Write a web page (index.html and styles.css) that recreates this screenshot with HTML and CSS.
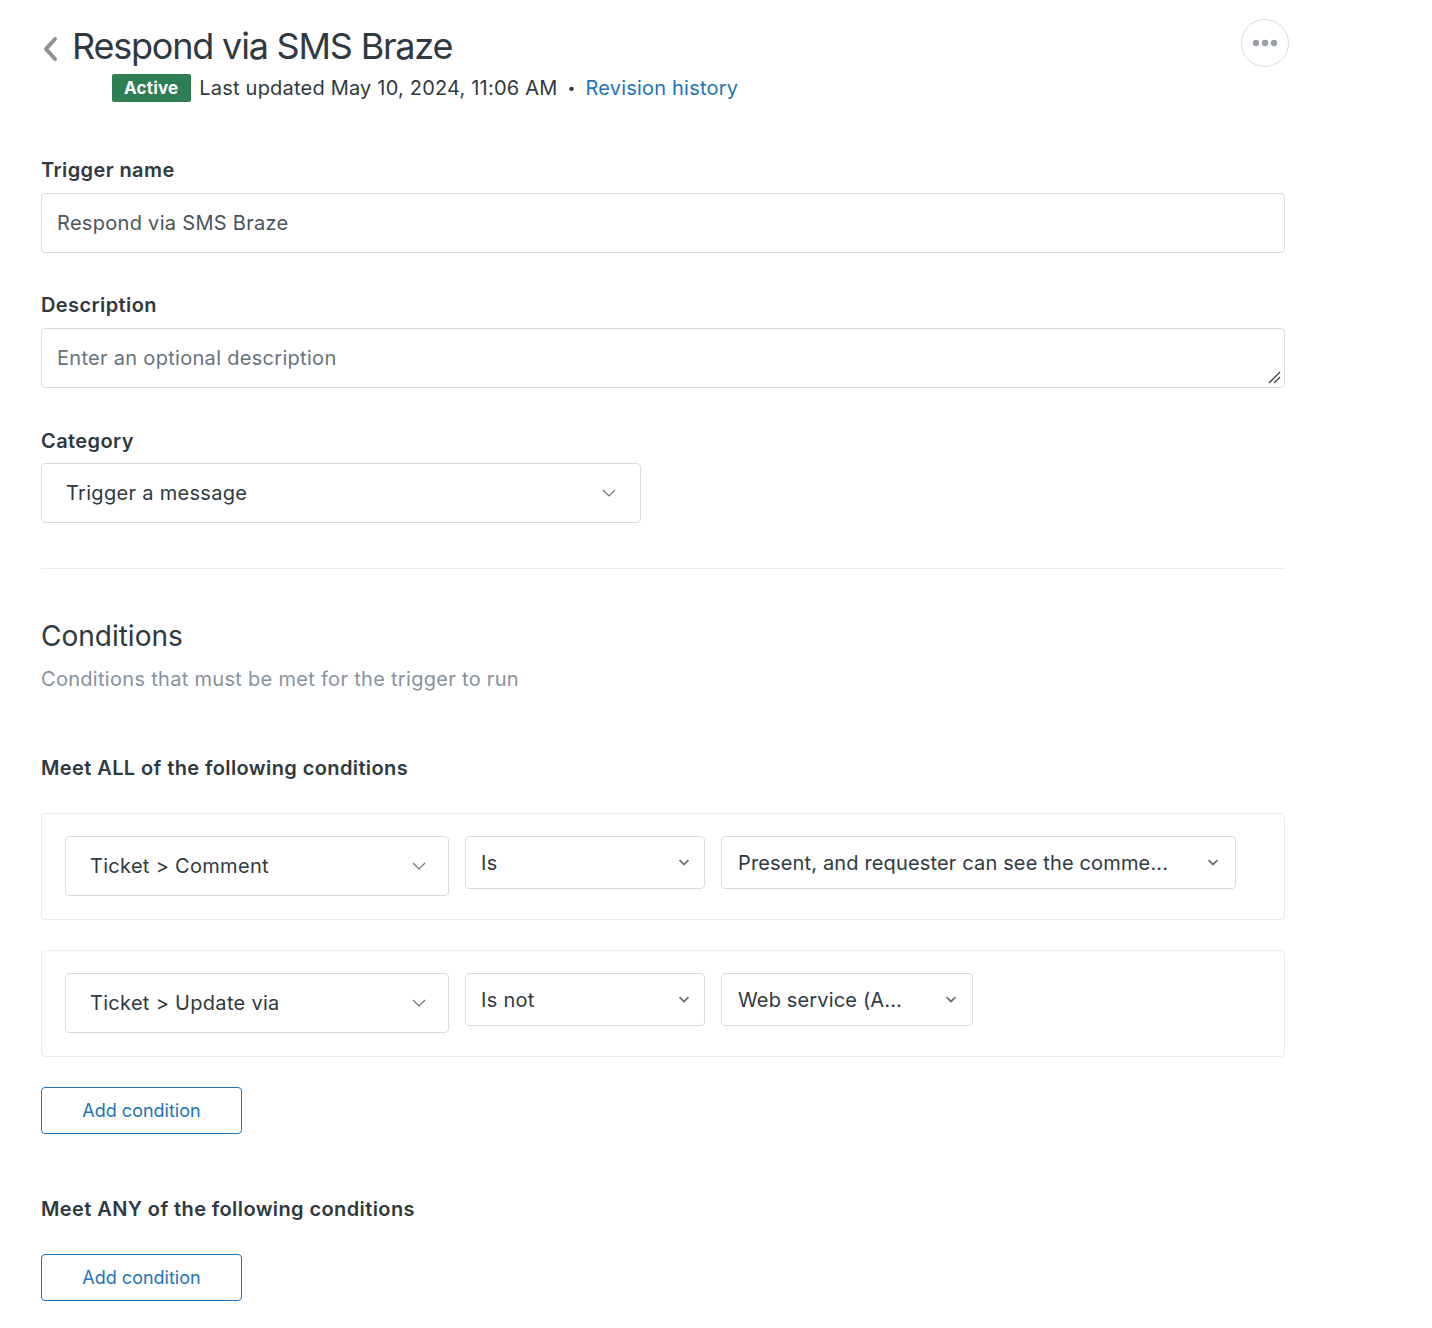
FILE: index.html
```html
<!DOCTYPE html>
<html>
<head>
<meta charset="utf-8">
<link rel="stylesheet" href="styles.css">
</head>
<body>
<div class="page">
  <header class="header">
    <div class="header-main">
      <div class="title-row">
        <svg class="back" width="18" height="28" viewBox="0 0 18 28"><path d="M14 4 L5 14 L14 24" fill="none" stroke="#8c9196" stroke-width="4" stroke-linecap="round" stroke-linejoin="round"/></svg>
        <h1 class="title">Respond via SMS Braze</h1>
      </div>
      <div class="meta">
        <span class="badge">Active</span>
        <span class="updated">Last updated May 10, 2024, 11:06 AM</span>
        <span class="sep">•</span>
        <a class="link">Revision history</a>
      </div>
    </div>
    <button class="more" aria-label="More">
      <svg width="26" height="8" viewBox="0 0 26 8"><circle cx="4" cy="4" r="3.2" fill="#9aa0a6"/><circle cx="13" cy="4" r="3.2" fill="#9aa0a6"/><circle cx="22" cy="4" r="3.2" fill="#9aa0a6"/></svg>
    </button>
  </header>

  <section class="form">
    <div class="field">
      <label class="label">Trigger name</label>
      <div class="input">Respond via SMS Braze</div>
    </div>
    <div class="field">
      <label class="label">Description</label>
      <div class="input textarea placeholder">Enter an optional description
        <svg class="grip" width="14" height="14" viewBox="0 0 14 14"><path d="M2 13 L13 2 M7 13 L13 7" stroke="#444" stroke-width="1.3"/></svg>
      </div>
    </div>
    <div class="field cat-field">
      <label class="label">Category</label>
      <div class="select category">
        <span>Trigger a message</span>
        <svg class="chev thin" width="14" height="8" viewBox="0 0 14 8"><path d="M1 1 L7 7 L13 1" fill="none" stroke="#68737d" stroke-width="1.2"/></svg>
      </div>
    </div>
  </section>

  <hr class="divider">

  <section class="conditions">
    <h2 class="h2">Conditions</h2>
    <p class="sub">Conditions that must be met for the trigger to run</p>

    <h3 class="h3 all">Meet ALL of the following conditions</h3>

    <div class="cond">
      <div class="select s1">
        <span>Ticket &gt; Comment</span>
        <svg class="chev" width="14" height="8" viewBox="0 0 14 8"><path d="M1 1 L7 7 L13 1" fill="none" stroke="#68737d" stroke-width="1.2"/></svg>
      </div>
      <div class="select s2">
        <span>Is</span>
        <svg class="chev" width="12" height="7" viewBox="0 0 12 7"><path d="M1.5 1.2 L6 5.5 L10.5 1.2" fill="none" stroke="#68737d" stroke-width="1.8"/></svg>
      </div>
      <div class="select s3">
        <span>Present, and requester can see the comme...</span>
        <svg class="chev" width="12" height="7" viewBox="0 0 12 7"><path d="M1.5 1.2 L6 5.5 L10.5 1.2" fill="none" stroke="#68737d" stroke-width="1.8"/></svg>
      </div>
    </div>

    <div class="cond">
      <div class="select s1">
        <span>Ticket &gt; Update via</span>
        <svg class="chev" width="14" height="8" viewBox="0 0 14 8"><path d="M1 1 L7 7 L13 1" fill="none" stroke="#68737d" stroke-width="1.2"/></svg>
      </div>
      <div class="select s2">
        <span>Is not</span>
        <svg class="chev" width="12" height="7" viewBox="0 0 12 7"><path d="M1.5 1.2 L6 5.5 L10.5 1.2" fill="none" stroke="#68737d" stroke-width="1.8"/></svg>
      </div>
      <div class="select s3 short">
        <span>Web service (A...</span>
        <svg class="chev" width="12" height="7" viewBox="0 0 12 7"><path d="M1.5 1.2 L6 5.5 L10.5 1.2" fill="none" stroke="#68737d" stroke-width="1.8"/></svg>
      </div>
    </div>

    <button class="btn">Add condition</button>

    <h3 class="h3 any">Meet ANY of the following conditions</h3>
    <button class="btn">Add condition</button>
  </section>
</div>
</body>
</html>
```

FILE: styles.css
```css
* { box-sizing: border-box; }
html, body { margin: 0; padding: 0; background: #fff; }
body {
  font-family: Inter, "Noto Sans", sans-serif;
  color: #2f3941;
  letter-spacing: 0.3px;
}
.page {
  padding: 19px 0 40px 41px;
  width: 1285px;
}
.header {
  display: flex;
  justify-content: space-between;
  align-items: flex-start;
  width: 1248px;
}
.title-row {
  display: flex;
  align-items: center;
  gap: 13px;
}
.back { margin-top: 6px; }
.title {
  margin: 0;
  font-size: 36px;
  font-weight: 400;
  line-height: 54px;
  letter-spacing: -1.2px;
  color: #2f3941;
}
.meta {
  display: flex;
  align-items: center;
  margin-left: 71px;
  margin-top: 1px;
  font-size: 20px;
  line-height: 28px;
  letter-spacing: 0.2px;
}
.badge {
  background: #2f7d52;
  color: #fff;
  font-weight: 700;
  font-size: 17px;
  letter-spacing: 0.2px;
  height: 28px;
  line-height: 28px;
  padding: 0 13px 0 12px;
  border-radius: 2px;
  margin-right: 8px;
}
.updated { color: #2f3941; }
.sep { margin: 0 10px; font-size: 14px; color: #2f3941; }
.link { color: #1f73b7; }
.more {
  width: 48px;
  height: 48px;
  border-radius: 50%;
  border: 1px solid #d8dcde;
  background: #fff;
  display: flex;
  align-items: center;
  justify-content: center;
  margin-top: 0;
  padding: 0;
}

.form {
  margin-top: 55px;
  width: 1244px;
  display: flex;
  flex-direction: column;
  gap: 39px;
}
.cat-field { margin-top: 1px; }
.field { display: flex; flex-direction: column; }
.label {
  font-size: 20px;
  font-weight: 600;
  line-height: 26px;
  margin-bottom: 10px;
  color: #2f3941;
  letter-spacing: 0.4px;
}
.input {
  height: 60px;
  border: 1px solid #d8dcde;
  border-radius: 4px;
  padding: 0 15px;
  display: flex;
  align-items: center;
  font-size: 20px;
  color: #49545c;
}
.textarea { position: relative; }
.placeholder { color: #68737d; }
.grip { position: absolute; right: 3px; bottom: 3px; }

.select {
  border: 1px solid #d8dcde;
  border-radius: 4px;
  display: flex;
  align-items: center;
  justify-content: space-between;
  font-size: 20px;
  color: #2f3941;
}
.category {
  width: 600px;
  height: 60px;
  padding: 0 24px 0 24px;
  margin-top: -1px;
}
.chev { flex: none; }

.divider {
  width: 1244px;
  margin: 45px 0 0 0;
  border: 0;
  border-top: 1px solid #e9ebed;
}

.conditions { width: 1244px; }
.h2 {
  margin: 46px 0 0 0;
  font-size: 28px;
  font-weight: 400;
  line-height: 42px;
  letter-spacing: 0;
}
.sub {
  margin: 8px 0 0 0;
  font-size: 20px;
  line-height: 28px;
  color: #87929d;
}
.h3 {
  margin: 0;
  font-size: 20px;
  font-weight: 600;
  line-height: 28px;
  letter-spacing: 0.4px;
}
.h3.all { margin-top: 61px; }
.cond {
  margin-top: 30px;
  border: 1px solid #e9ebed;
  border-radius: 4px;
  padding: 22px 23px;
  display: flex;
  align-items: flex-start;
  gap: 16px;
  height: 107px;
}
.h3.all + .cond { margin-top: 31px; }
.s1 { width: 384px; height: 60px; padding: 0 22px 0 24px; }
.s2 { width: 240px; height: 53px; padding: 0 14px 0 15px; }
.s3 { width: 515px; height: 53px; padding: 0 16px 0 16px; letter-spacing: 0.15px; }
.s3.short { width: 252px; padding-right: 15px; }

.btn {
  display: block;
  margin-top: 30px;
  width: 201px;
  height: 47px;
  border: 1px solid #1f73b7;
  border-radius: 4px;
  background: #fff;
  color: #1f73b7;
  font-family: Inter, "Noto Sans", sans-serif;
  font-size: 18px;
  letter-spacing: 0;
}
.h3.any { margin-top: 61px; }
.h3.any + .btn { margin-top: 31px; }
```
